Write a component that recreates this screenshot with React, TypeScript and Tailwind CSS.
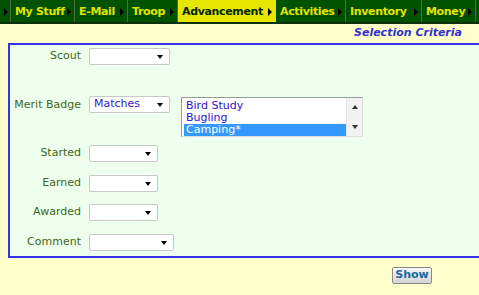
import React from "react";

const tabs: { name: string; w: string }[] = [
  { name: "My Stuff", w: "w-[64px]" },
  { name: "E-Mail", w: "w-[53px]" },
  { name: "Troop", w: "w-[50px]" },
  { name: "Advancement", w: "w-[98px]" },
  { name: "Activities", w: "w-[70px]" },
  { name: "Inventory", w: "w-[76px]" },
  { name: "Money", w: "w-[54px]" },
];
const active = "Advancement";

function Arrow() {
  return (
    <span className="inline-block h-0 w-0 border-y-[4px] border-l-[4px] border-y-transparent border-l-black" />
  );
}

function Select({ width, value }: { width: string; value?: string }) {
  return (
    <div
      className={`${width} flex h-[17px] items-center justify-between rounded-[2px] border border-[#c8c8c8] bg-white pl-[4px] pr-[6px] text-[11px] text-[#3322cc]`}
    >
      <span>{value}</span>
      <span className="inline-block h-0 w-0 border-x-[3.5px] border-t-[4px] border-x-transparent border-t-black" />
    </div>
  );
}

function Row({ label, children, className }: { label: string; children: React.ReactNode; className?: string }) {
  return (
    <div className={`flex items-center ${className ?? ""}`}>
      <div className="w-[72px] pr-[1px] text-right text-[11px] text-[#3f6619]">{label}</div>
      <div className="ml-[7px]">{children}</div>
    </div>
  );
}

export default function App() {
  return (
    <div className="h-[295px] w-[479px] overflow-hidden bg-[#ffffcc] font-['DejaVu_Sans',Verdana,sans-serif]">
      <nav className="flex h-[24px] whitespace-nowrap border-b-2 border-b-[#0c300c] bg-[#005200] text-[11px] font-bold tracking-[-0.35px]">
        <div className="flex w-[11px] shrink-0 items-center border-r border-r-[#4b6b4b] pl-[4px] pt-[2px]">
          <Arrow />
        </div>
        {tabs.map((t) => (
          <div
            key={t.name}
            className={`flex ${t.w} shrink-0 items-center justify-between border-r pl-[4px] pr-[3px] pt-[2px] ${
              t.name === active
                ? "border-r-[#e6e600] bg-[#e6e600] text-[#002800]"
                : "border-r-[#4b6b4b] text-[#e3e300]"
            }`}
          >
            <span>{t.name}</span>
            <span className="flex">
              <Arrow />
            </span>
          </div>
        ))}
      </nav>

      <div className="flex h-[19px] items-center justify-end pr-[17px] text-[11px] font-bold italic text-[#3333cc]">
        Selection Criteria
      </div>

      <div className="ml-[8px] h-[215px] border-y-2 border-l-2 border-[#3333ee] bg-[#eeffee] pt-[3px]">
        <Row label="Scout">
          <Select width="w-[81px]" />
        </Row>

        <div className="mt-[31px] flex items-start">
          <div className="w-[72px] pr-[1px] pt-[1px] text-right text-[11px] text-[#3f6619]">Merit Badge</div>
          <div className="ml-[7px]">
            <Select width="w-[81px]" value="Matches" />
          </div>
          <div className="ml-[11px] mt-[1px] flex h-[40px] w-[182px] border border-t-[#999] border-l-[#999] border-r-[#ddd] border-b-[#ddd] bg-white text-[11px] leading-[12px] text-[#3311cc]">
            <div className="flex-1 pl-[2px] pt-[2px]">
              <div className="pl-[2px]">Bird Study</div>
              <div className="pl-[2px]">Bugling</div>
              <div className="bg-[#3399ff] pl-[2px] text-white">Camping*</div>
            </div>
            <div className="flex w-[16px] flex-col items-center justify-between border-l border-l-[#e4e4e4] bg-[#f2f2f2] py-[7px]">
              <span className="inline-block h-0 w-0 border-x-[3.5px] border-b-[4px] border-x-transparent border-b-[#333]" />
              <span className="inline-block h-0 w-0 border-x-[3.5px] border-t-[4px] border-x-transparent border-t-[#333]" />
            </div>
          </div>
        </div>

        <Row label="Started" className="mt-[8px]">
          <Select width="w-[69px]" />
        </Row>
        <Row label="Earned" className="mt-[13px]">
          <Select width="w-[69px]" />
        </Row>
        <Row label="Awarded" className="mt-[12px]">
          <Select width="w-[69px]" />
        </Row>
        <Row label="Comment" className="mt-[13px]">
          <Select width="w-[85px]" />
        </Row>
      </div>

      <div className="flex justify-end pr-[47px] pt-[9px]">
        <button className="flex h-[17px] w-[40px] items-center justify-center rounded-[2px] border border-[#8a8a8a] bg-gradient-to-b from-[#f6f6f6] to-[#d4d4d4] text-[11px] font-bold text-[#1a6aa0]">
          Show
        </button>
      </div>
    </div>
  );
}
